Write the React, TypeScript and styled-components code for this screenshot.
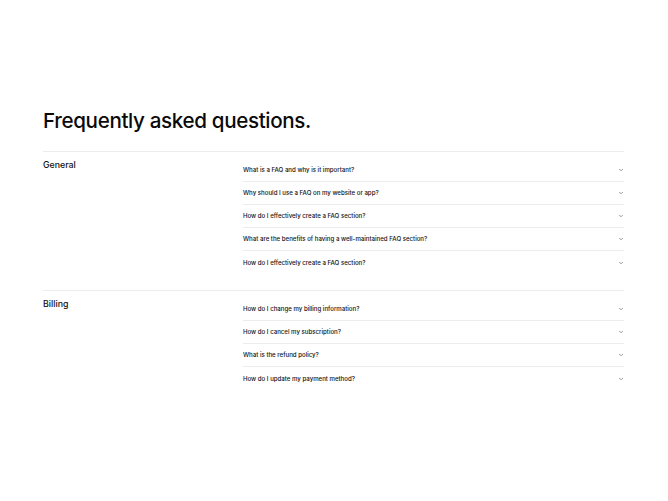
import React from "react";
import styled, { createGlobalStyle } from "styled-components";

const Global = createGlobalStyle`
  html, body { margin: 0; padding: 0; background: #ffffff; }
  body { font-family: Inter, "Noto Sans", sans-serif; color: #0a0a0a; -webkit-font-smoothing: antialiased; }
`;

const Page = styled.main`
  padding: 107px 44px 0 43px;
`;

const Title = styled.h1`
  margin: 0 0 16px 0;
  font-size: 20.6px;
  line-height: 28px;
  font-weight: 500;
  letter-spacing: -0.35px;
  color: #0a0a0a;
`;

const Section = styled.section`
  display: grid;
  grid-template-columns: 200px 1fr;
  border-top: 1px solid #ececec;
  padding: 7px 0 16px 0;
`;

const SectionName = styled.h2`
  margin: 0;
  padding-top: 0;
  font-size: 8.8px;
  line-height: 12px;
  font-weight: 500;
  color: #111;
`;

const List = styled.div`
  display: flex;
  flex-direction: column;
`;

const Row = styled.div<{ $last?: boolean }>`
  display: flex;
  align-items: center;
  justify-content: space-between;
  height: 23px;
  border-bottom: ${(p) => (p.$last ? "none" : "1px solid #ececec")};
  box-sizing: border-box;
`;

const Question = styled.span`
  font-size: 6.1px;
  line-height: 10px;
  font-weight: 500;
  color: #111;
`;

const Chevron = () => (
  <svg width="6" height="6" viewBox="0 0 24 24" fill="none" stroke="#555" strokeWidth="2.5" strokeLinecap="round" strokeLinejoin="round">
    <path d="M6 9l6 6 6-6" />
  </svg>
);

const sections = [
  {
    name: "General",
    items: [
      "What is a FAQ and why is it important?",
      "Why should I use a FAQ on my website or app?",
      "How do I effectively create a FAQ section?",
      "What are the benefits of having a well-maintained FAQ section?",
      "How do I effectively create a FAQ section?",
    ],
  },
  {
    name: "Billing",
    items: [
      "How do I change my billing information?",
      "How do I cancel my subscription?",
      "What is the refund policy?",
      "How do I update my payment method?",
    ],
  },
];

export default function App() {
  return (
    <>
      <Global />
      <Page>
        <Title>Frequently asked questions.</Title>
        {sections.map((s) => (
          <Section key={s.name}>
            <SectionName>{s.name}</SectionName>
            <List>
              {s.items.map((q, i) => (
                <Row key={i} $last={i === s.items.length - 1}>
                  <Question>{q}</Question>
                  <Chevron />
                </Row>
              ))}
            </List>
          </Section>
        ))}
      </Page>
    </>
  );
}
